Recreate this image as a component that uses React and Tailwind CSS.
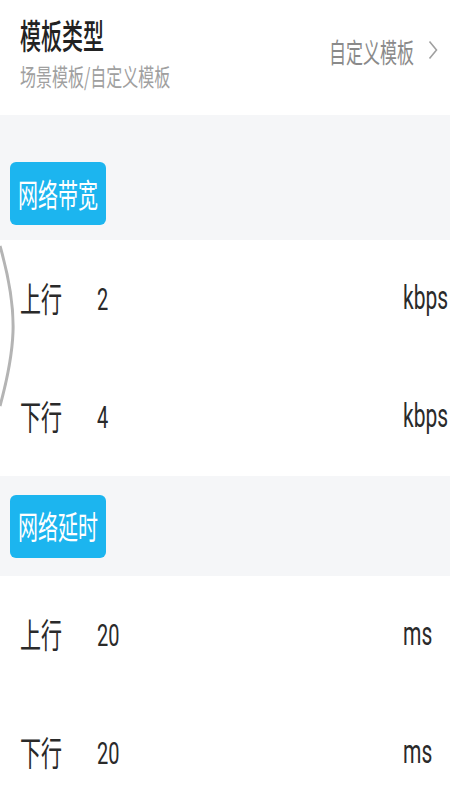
const font = { fontFamily: '"Noto Sans CJK SC", "Noto Sans", sans-serif' }

function Tall({ className = "", children }) {
  return <span className={`inline-block origin-center scale-y-[1.6] ${className}`}>{children}</span>
}

function Badge({ label }) {
  return (
    <div className="flex h-[63px] w-[96px] items-center justify-center rounded-[6px] bg-[#1cb5ef] text-[20px] text-white">
      <Tall>{label}</Tall>
    </div>
  )
}

function Row({ label, value, unit }) {
  return (
    <div className="flex h-[118px] items-center pl-5 text-[21px] text-[#2a2a2a]">
      <Tall className="w-[77px]">{label}</Tall>
      <Tall className="flex-1 font-['Roboto'] text-[20px]">{value}</Tall>
      <Tall className="w-[47px] font-['Roboto'] text-[21px]">{unit}</Tall>
    </div>
  )
}

export default function App() {
  return (
    <div className="relative h-[800px] w-[450px] overflow-hidden bg-white" style={font}>
      {/* header */}
      <div className="flex h-[115px] items-start justify-between pl-5 pr-3">
        <div className="flex flex-col">
          <Tall className="mt-[25px] text-[21px] font-medium leading-none text-[#222]">模板类型</Tall>
          <span className="mt-[21px] inline-block origin-center scale-y-[1.5] text-[16px] leading-none text-[#a0a0a0]">
            场景模板/自定义模板
          </span>
        </div>
        <div className="mt-[40px] flex items-center gap-[14px] text-[#8a8a8a]">
          <Tall className="text-[17px] leading-none">自定义模板</Tall>
          <svg width="10" height="20" viewBox="0 0 10 20" fill="none">
            <path d="M1.5 1.5 L8.5 10 L1.5 18.5" stroke="#a0a0a0" strokeWidth="1.6" />
          </svg>
        </div>
      </div>

      {/* bandwidth */}
      <div className="h-[125px] bg-[#f5f6f8] pl-[10px] pt-[47px]">
        <Badge label="网络带宽" />
      </div>
      <Row label="上行" value="2" unit="kbps" />
      <Row label="下行" value="4" unit="kbps" />

      {/* latency */}
      <div className="flex h-[100px] items-center bg-[#f5f6f8] pl-[10px]">
        <Badge label="网络延时" />
      </div>
      <Row label="上行" value="20" unit="ms" />
      <Row label="下行" value="20" unit="ms" />

      {/* back gesture edge */}
      <svg className="absolute left-0 top-[244px]" width="18" height="165" viewBox="0 0 18 165" fill="none">
        <path d="M0 2 C8 30, 14 60, 13 88 C12 115, 6 140, 0 162" stroke="#b4b4b4" strokeWidth="3" />
      </svg>
    </div>
  )
}
